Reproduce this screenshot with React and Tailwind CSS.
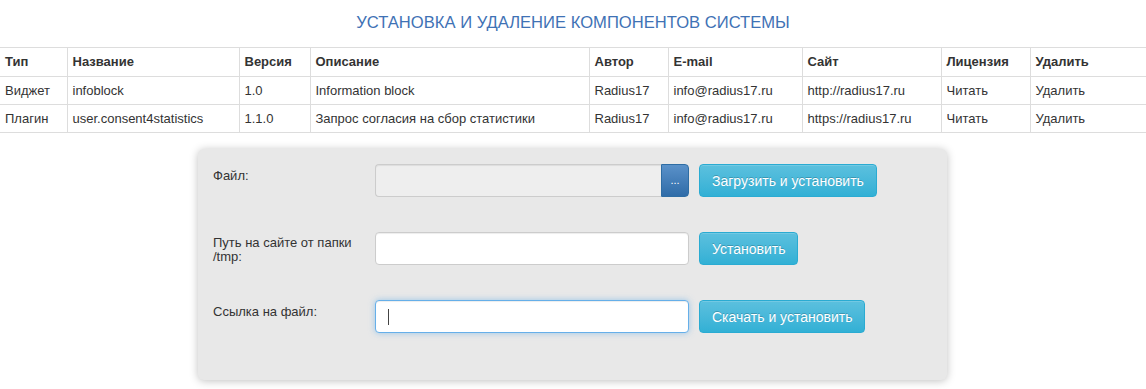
const columns = [
  { title: "Тип", w: "w-[67px]" },
  { title: "Название", w: "w-[172px]" },
  { title: "Версия", w: "w-[71px]" },
  { title: "Описание", w: "w-[279px]" },
  { title: "Автор", w: "w-[79px]" },
  { title: "E-mail", w: "w-[134px]" },
  { title: "Сайт", w: "w-[139px]" },
  { title: "Лицензия", w: "w-[89px]" },
  { title: "Удалить", w: "w-auto" },
];

const rows = [
  ["Виджет", "infoblock", "1.0", "Information block", "Radius17", "info@radius17.ru", "http://radius17.ru", "Читать", "Удалить"],
  ["Плагин", "user.consent4statistics", "1.1.0", "Запрос согласия на сбор статистики", "Radius17", "info@radius17.ru", "https://radius17.ru", "Читать", "Удалить"],
];

const infoBtn =
  "h-[33px] px-3 rounded-[4px] border border-[#2aabd2] bg-gradient-to-b from-[#5bc0de] to-[#31b0d5] text-white text-[14px] leading-none shadow-[inset_0_1px_0_rgba(255,255,255,0.15)] [text-shadow:0_-1px_0_rgba(0,0,0,0.2)]";

const App = () => {
  return (
    <div className="min-h-[389px] bg-white font-['Liberation_Sans',Arial,sans-serif] text-[13px] text-[#333]">
      {/* Title */}
      <h1 className="pt-[12px] h-[47px] text-center text-[16.6px] leading-[22px] text-[#3f72b5]">
        УСТАНОВКА И УДАЛЕНИЕ КОМПОНЕНТОВ СИСТЕМЫ
      </h1>

      {/* Components table */}
      <table className="w-full table-fixed border-collapse">
        <thead>
          <tr className="h-[29px]">
            {columns.map((c, i) => (
              <th
                key={c.title}
                className={`${c.w} border-t border-b border-[#ddd] px-[5px] text-left font-bold ${i > 0 ? "border-l" : ""}`}
              >
                {c.title}
              </th>
            ))}
          </tr>
        </thead>
        <tbody>
          {rows.map((r, ri) => (
            <tr key={ri} className="h-[28px]">
              {r.map((cell, i) => (
                <td key={i} className={`border-b border-[#ddd] px-[5px] ${i > 0 ? "border-l" : ""}`}>
                  {cell}
                </td>
              ))}
            </tr>
          ))}
        </tbody>
      </table>

      {/* Install panel */}
      <div className="mt-[16px] ml-[198px] w-[749px] h-[231px] rounded-[6px] bg-[#e8e8e8] shadow-[0_1px_8px_rgba(0,0,0,0.25)] pt-[15px] pl-[15px]">
        <div className="flex flex-col gap-[35px]">
          {/* File */}
          <div className="flex">
            <label className="w-[162px] pt-[4px] pr-[20px] leading-[15px]">Файл:</label>
            <div className="flex">
              <div className="w-[286px] h-[33px] rounded-l-[4px] border border-r-0 border-[#ccc] bg-[#eeeeee] shadow-[inset_0_1px_1px_rgba(0,0,0,0.075)]"></div>
              <button className="w-[28px] h-[33px] rounded-r-[4px] border border-[#2e6da4] bg-gradient-to-b from-[#5a91c9] to-[#2f6ca8] text-white text-[11px] leading-none">
                ...
              </button>
            </div>
            <button className={`ml-[10px] ${infoBtn}`}>Загрузить и установить</button>
          </div>

          {/* Path */}
          <div className="flex">
            <label className="w-[162px] pt-[4px] pr-[20px] leading-[14px]">Путь на сайте от папки /tmp:</label>
            <div className="w-[314px] h-[33px] rounded-[4px] border border-[#ccc] bg-white shadow-[inset_0_1px_1px_rgba(0,0,0,0.075)]"></div>
            <button className={`ml-[10px] ${infoBtn}`}>Установить</button>
          </div>

          {/* Link */}
          <div className="flex">
            <label className="w-[162px] pt-[4px] pr-[20px] leading-[15px]">Ссылка на файл:</label>
            <div className="w-[314px] h-[33px] rounded-[4px] border border-[#66afe9] bg-white shadow-[inset_0_1px_1px_rgba(0,0,0,0.075),0_0_6px_rgba(102,175,233,0.6)] flex items-center pl-[12px]">
              <span className="block w-px h-[16px] bg-[#444]"></span>
            </div>
            <button className={`ml-[10px] ${infoBtn}`}>Скачать и установить</button>
          </div>
        </div>
      </div>
    </div>
  );
};

export default App;
